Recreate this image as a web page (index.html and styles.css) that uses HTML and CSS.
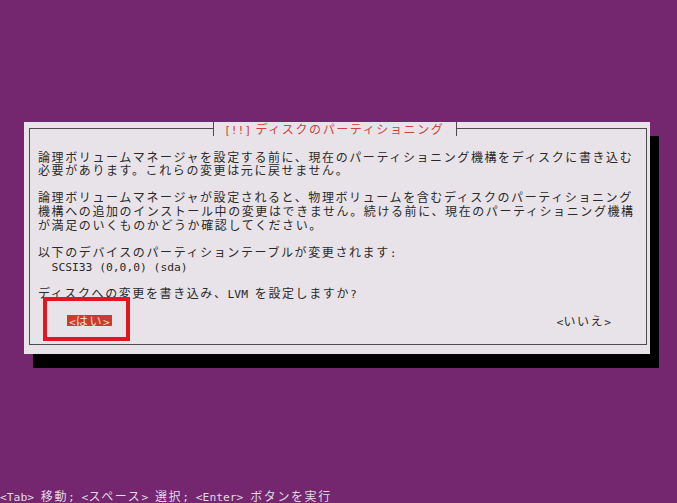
FILE: index.html
```html
<!DOCTYPE html>
<html lang="ja">
<head>
  <meta charset="UTF-8">
  <title>ディスクのパーティショニング</title>
  <link rel="stylesheet" href="styles.css">
</head>
<body>
  <div class="screen">
    <div class="dialog">
      <fieldset class="frame">
        <legend class="title"><span class="ascii">[!!]</span> ディスクのパーティショニング</legend>
        <p>論理ボリュームマネージャを設定する前に、現在のパーティショニング機構をディスクに書き込む<br>必要があります。これらの変更は元に戻せません。</p>
        <p>論理ボリュームマネージャが設定されると、物理ボリュームを含むディスクのパーティショニング<br>機構への追加のインストール中の変更はできません。続ける前に、現在のパーティショニング機構<br>が満足のいくものかどうか確認してください。</p>
        <p>以下のデバイスのパーティションテーブルが変更されます<span class="ascii">:</span><br><span class="ascii">  SCSI33 (0,0,0) (sda)</span></p>
        <p>ディスクへの変更を書き込み、<span class="ascii">LVM </span>を設定しますか<span class="ascii">?</span></p>
        <div class="buttons">
          <span class="btn active"><span class="ascii">&lt;</span>はい<span class="ascii">&gt;</span></span>
          <span class="btn"><span class="ascii">&lt;</span>いいえ<span class="ascii">&gt;</span></span>
        </div>
      </fieldset>
      <div class="mark"></div>
    </div>
    <div class="status"><span class="ascii">&lt;Tab&gt; </span>移動<span class="ascii">; &lt;</span>スペース<span class="ascii">&gt; </span>選択<span class="ascii">; &lt;Enter&gt; </span>ボタンを実行</div>
  </div>
</body>
</html>
```

FILE: styles.css
```css
body {
  margin: 0;
  background: #74276f;
  font-family: "Noto Sans CJK JP", "DejaVu Sans", sans-serif;
  font-size: 12px;
  line-height: 13.6px;
  letter-spacing: 1.6px;
  color: #2a2a2a;
}

.screen {
  height: 503px;
  display: flex;
  flex-direction: column;
}

.ascii {
  font-family: "DejaVu Sans Mono", "Liberation Mono", monospace;
  font-size: 11.3px;
  line-height: 10px;
  letter-spacing: 0;
  white-space: pre;
}

.dialog {
  position: relative;
  box-sizing: border-box;
  width: 626px;
  height: 232px;
  margin: 122px 0 0 24px;
  padding: 0 3px 9px 5px;
  background: #e8e3e8;
  box-shadow: 9px 14px 0 #000;
  display: flex;
  flex-direction: column;
}

.frame {
  flex: 1;
  margin: 0;
  min-width: 0;
  padding: 14px 8px 0 8px;
  border: 1px solid #4e4a4e;
}

.title {
  margin-left: 175px;
  padding: 0 12px 0 10px;
  height: 13.6px;
  border-left: 1px solid #4e4a4e;
  border-right: 1px solid #4e4a4e;
  color: #c8433d;
}

p {
  margin: 0 0 13.6px 0;
  white-space: nowrap;
}

.buttons {
  display: flex;
  justify-content: space-between;
  align-items: center;
  height: 13.6px;
}

.btn {
  display: inline-block;
  height: 11px;
  line-height: 11px;
}

.btn:first-child {
  margin-left: 29px;
  padding: 0 2px;
}

.btn:last-child {
  margin-right: 27px;
}

.active {
  background: #cc3c2e;
  color: #f6d9d2;
}

.mark {
  position: absolute;
  left: 19px;
  top: 175px;
  width: 79px;
  height: 36px;
  border: 4px solid #e3161f;
}

.status {
  margin-top: auto;
  height: 13.6px;
  color: #e2d9e2;
  white-space: nowrap;
}
```
